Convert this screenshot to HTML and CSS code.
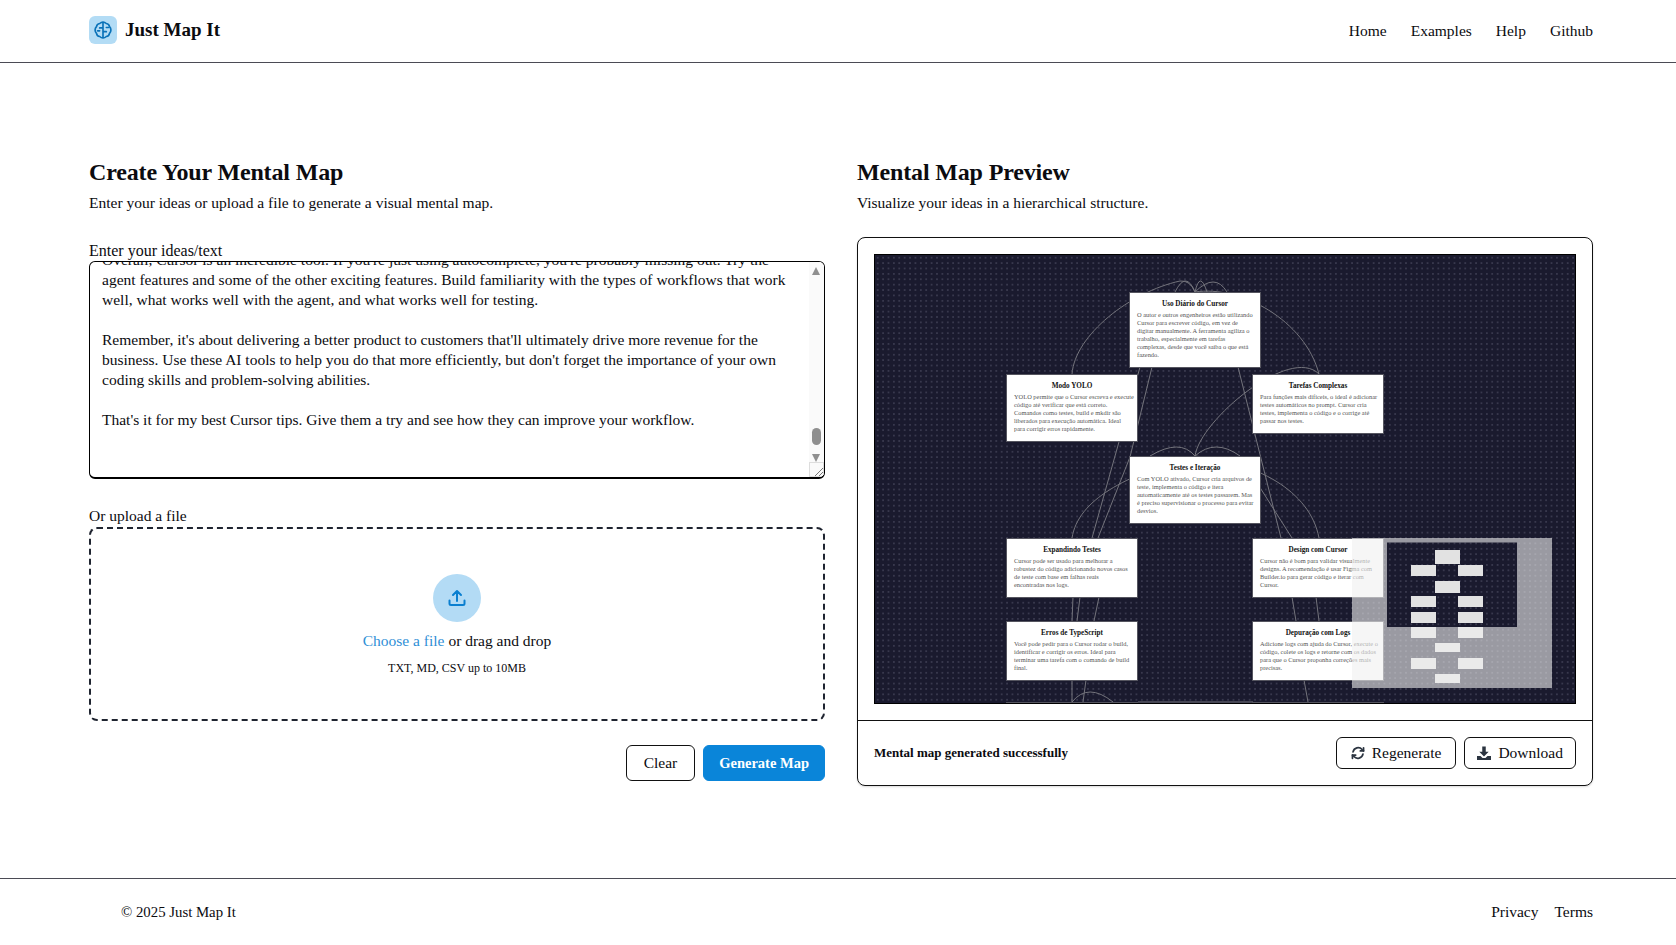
FILE: index.html
```html
<!DOCTYPE html>
<html lang="en">
<head>
    <meta charset="UTF-8">
    <meta name="viewport" content="width=device-width, initial-scale=1.0">
    <title>Just Map It</title>
    <link rel="stylesheet" href="styles.css">
</head>
<body>
    <header class="site-header">
        <a class="brand" href="#">
            <span class="brand-icon">
                <svg width="20" height="20" viewBox="0 0 24 24" fill="none" stroke="#0a72b8" stroke-width="2" stroke-linecap="round" stroke-linejoin="round">
                    <path d="M12 2.500c2 0 3 .8 4 1.700 2 .3 3.500 1.800 3.800 3.800 1 1 1.700 2.500 1.700 4s-.7 3-1.700 4c-.3 2-1.800 3.500-3.800 3.800-1 .9-2 1.700-4 1.700s-3-.8-4-1.700c-2-.3-3.500-1.800-3.800-3.800-1-1-1.700-2.500-1.700-4s.7-3 1.700-4c.3-2 1.800-3.500 3.800-3.800 1-.9 2-1.700 4-1.700z"/>
                    <path d="M12 3v18M8 9.500h4M12 14h4M5.500 13H8M16 9h2.500"/>
                </svg>
            </span>
            <span class="brand-name">Just Map It</span>
        </a>
        <nav class="site-nav">
            <a href="#">Home</a>
            <a href="#">Examples</a>
            <a href="#">Help</a>
            <a href="#">Github</a>
        </nav>
    </header>

    <main class="page-main">
        <section class="input-col">
            <h1>Create Your Mental Map</h1>
            <p class="lead">Enter your ideas or upload a file to generate a visual mental map.</p>

            <label class="field-label">Enter your ideas/text</label>
            <div class="text-box">
                <div class="text-content">
                    <p>Overall, Cursor is an incredible tool. If you're just using autocomplete, you're probably missing out. Try the<br>agent features and some of the other exciting features. Build familiarity with the types of workflows that work<br>well, what works well with the agent, and what works well for testing.</p>
                    <p>Remember, it's about delivering a better product to customers that'll ultimately drive more revenue for the<br>business. Use these AI tools to help you do that more efficiently, but don't forget the importance of your own<br>coding skills and problem-solving abilities.</p>
                    <p>That's it for my best Cursor tips. Give them a try and see how they can improve your workflow.</p>
                </div>
                <div class="scroll-bar">
                    <span class="arrow-up"></span>
                    <span class="thumb"></span>
                    <span class="arrow-down"></span>
                </div>
                <span class="resize-grip"></span>
            </div>

            <label class="field-label upload-label">Or upload a file</label>
            <div class="drop-zone">
                <span class="upload-circle">
                    <svg width="20" height="20" viewBox="0 0 20 20" fill="none" stroke="#0a7fd0" stroke-width="2" stroke-linecap="round" stroke-linejoin="round">
                        <path d="M2.500 12.500v3a1.500 1.500 0 0 0 1.500 1.500h12a1.500 1.500 0 0 0 1.500-1.500v-3"/>
                        <path d="M10 13V3M6 7l4-4 4 4"/>
                    </svg>
                </span>
                <p class="drop-text"><a href="#">Choose a file</a> or drag and drop</p>
                <p class="drop-hint">TXT, MD, CSV up to 10MB</p>
            </div>

            <div class="form-actions">
                <button class="btn btn-clear">Clear</button>
                <button class="btn btn-primary">Generate Map</button>
            </div>
        </section>

        <section class="preview-col">
            <h1>Mental Map Preview</h1>
            <p class="lead">Visualize your ideas in a hierarchical structure.</p>

            <div class="preview-card">
                <div class="map-area">
                    <svg class="edges" viewBox="875 255 700 448" fill="none" stroke="#74747c" stroke-width="1">
                        <path d="M1072 374C1075 335 1130 292 1180 281Q1190 280 1195 292"/>
                        <path d="M1175 292Q1186 270 1195 292Q1200 270 1207 292"/>
                        <path d="M1195 292Q1215 272 1227 292"/>
                        <path d="M1195 292C1240 285 1305 320 1319 374"/>
                        <path d="M1152 367L1130 457L1098 538"/>
                        <path d="M1140 367L1092 538"/>
                        <path d="M1238 367L1281 538"/>
                        <path d="M1195 456C1200 420 1290 345 1319 374"/>
                        <path d="M1150 456Q1180 438 1195 456Q1215 438 1240 456"/>
                        <path d="M1072 538C1078 500 1125 475 1195 456"/>
                        <path d="M1195 456C1255 462 1310 490 1319 538"/>
                        <path d="M1240 456L1292 538"/>
                        <path d="M1073 597L1072 621M1080 597L1077 621M1099 597L1094 621"/>
                        <path d="M1292 597L1296 621M1316 597L1319 621"/>
                        <path d="M1072 680L1072 702M1086 680L1083 702M1304 680L1308 702"/>
                        <path d="M1072 702Q1088 682 1113 702M1138 702H1253"/>
                    </svg>

                    <div class="map-node node-daily">
                        <h3>Uso Diário do Cursor</h3>
                        <p>O autor e outros engenheiros estão utilizando<br>Cursor para escrever código, em vez de<br>digitar manualmente. A ferramenta agiliza o<br>trabalho, especialmente em tarefas<br>complexas, desde que você saiba o que está<br>fazendo.</p>
                    </div>
                    <div class="map-node node-yolo">
                        <h3>Modo YOLO</h3>
                        <p>YOLO permite que o Cursor escreva e execute<br>código até verificar que está correto.<br>Comandos como testes, build e mkdir são<br>liberados para execução automática. Ideal<br>para corrigir erros rapidamente.</p>
                    </div>
                    <div class="map-node node-tasks">
                        <h3>Tarefas Complexas</h3>
                        <p>Para funções mais difíceis, o ideal é adicionar<br>testes automáticos no prompt. Cursor cria<br>testes, implementa o código e o corrige até<br>passar nos testes.</p>
                    </div>
                    <div class="map-node node-tests">
                        <h3>Testes e Iteração</h3>
                        <p>Com YOLO ativado, Cursor cria arquivos de<br>teste, implementa o código e itera<br>automaticamente até os testes passarem. Mas<br>é preciso supervisionar o processo para evitar<br>desvios.</p>
                    </div>
                    <div class="map-node node-expand">
                        <h3>Expandindo Testes</h3>
                        <p>Cursor pode ser usado para melhorar a<br>robustez do código adicionando novos casos<br>de teste com base em falhas reais<br>encontradas nos logs.</p>
                    </div>
                    <div class="map-node node-design">
                        <h3>Design com Cursor</h3>
                        <p>Cursor não é bom para validar visualmente<br>designs. A recomendação é usar Figma com<br>Builder.io para gerar código e iterar com<br>Cursor.</p>
                    </div>
                    <div class="map-node node-errors">
                        <h3>Erros de TypeScript</h3>
                        <p>Você pode pedir para o Cursor rodar o build,<br>identificar e corrigir os erros. Ideal para<br>terminar uma tarefa com o comando de build<br>final.</p>
                    </div>
                    <div class="map-node node-logs">
                        <h3>Depuração com Logs</h3>
                        <p>Adicione logs com ajuda do Cursor, execute o<br>código, colete os logs e retorne com os dados<br>para que o Cursor proponha correções mais<br>precisas.</p>
                    </div>
                    <div class="map-node node-cut-left"></div>
                    <div class="map-node node-cut-right"></div>

                    <svg class="mini-map" width="200" height="150" viewBox="1352 538 200 150">
                        <g fill="#e2e2e2">
                            <rect x="1435" y="550" width="25" height="14"/>
                            <rect x="1411" y="565" width="25" height="11"/>
                            <rect x="1458" y="565" width="25" height="11"/>
                            <rect x="1435" y="581" width="25" height="12"/>
                            <rect x="1411" y="596" width="25" height="11"/>
                            <rect x="1458" y="596" width="25" height="11"/>
                            <rect x="1411" y="612" width="25" height="11"/>
                            <rect x="1458" y="612" width="25" height="11"/>
                            <rect x="1411" y="627" width="25" height="11"/>
                            <rect x="1458" y="627" width="25" height="11"/>
                            <rect x="1435" y="643" width="25" height="9"/>
                            <rect x="1411" y="658" width="25" height="11"/>
                            <rect x="1458" y="658" width="25" height="11"/>
                            <rect x="1435" y="674" width="25" height="9"/>
                        </g>
                        <path fill="rgba(240,240,240,0.6)" fill-rule="evenodd" stroke="none" d="M1352 538h200v150h-200zM1387 542.500v84.500h130v-84.500z"/>
                    </svg>
                </div>
                <div class="preview-footer">
                    <span class="status">Mental map generated successfully</span>
                    <div class="preview-actions">
                        <button class="btn btn-small btn-regen">
                            <svg width="14" height="14" viewBox="0 0 24 24" fill="none" stroke="#2b3440" stroke-width="3" stroke-linecap="round" stroke-linejoin="round">
                                <path d="M3.500 10a9 9 0 0 1 15.500-4l2.500 2.500M20.500 14a9 9 0 0 1-15.500 4l-2.500-2.500"/>
                                <path d="M21.500 3v5.500h-5.500M2.500 21v-5.500h5.500"/>
                            </svg>
                            Regenerate
                        </button>
                        <button class="btn btn-small btn-download">
                            <svg width="14" height="14" viewBox="0 0 24 24" fill="#2b3440">
                                <path d="M9 1h6v9h5l-8 8-8-8h5z"/>
                                <path d="M0 17h6l3.500 3.500h5L18 17h6v7H0z"/>
                            </svg>
                            Download
                        </button>
                    </div>
                </div>
            </div>
        </section>
    </main>

    <footer class="site-footer">
        <span class="copyright">© 2025 Just Map It</span>
        <nav class="footer-nav">
            <a href="#">Privacy</a>
            <a href="#">Terms</a>
        </nav>
    </footer>
</body>
</html>
```

FILE: styles.css
```css
* {
    box-sizing: border-box;
}

body {
    margin: 0;
    height: 945px;
    display: flex;
    flex-direction: column;
    background-color: #fff;
    color: #0b0b0f;
    font-family: "Liberation Serif", serif;
    font-size: 15.500px;
    overflow: hidden;
}

a {
    color: inherit;
    text-decoration: none;
}

p {
    margin: 0;
}

.site-header {
    height: 63px;
    padding: 0 83px 0 89px;
    display: flex;
    align-items: center;
    justify-content: space-between;
    border-bottom: 1px solid #4b4b55;
}

.brand {
    display: flex;
    align-items: center;
    gap: 8px;
    margin-top: -3px;
}

.brand-icon {
    width: 28px;
    height: 28px;
    display: flex;
    align-items: center;
    justify-content: center;
    border-radius: 6px;
    background-color: #b3dcf5;
}

.brand-name {
    font-size: 19px;
    font-weight: bold;
}

.site-nav {
    display: flex;
    gap: 24px;
}

.page-main {
    flex: 1;
    padding: 93px 82px 0 89px;
    display: grid;
    grid-template-columns: 736px 737px;
    column-gap: 32px;
    align-items: start;
}

h1 {
    margin: 0;
    font-size: 24px;
    line-height: 32px;
    font-weight: bold;
    letter-spacing: -0.150px;
}

.lead {
    margin-top: 3px;
    line-height: 24px;
}

.field-label {
    display: block;
    margin-top: 26px;
    font-size: 16px;
    line-height: 20px;
}

.text-box {
    position: relative;
    height: 218px;
    overflow: hidden;
    border: 1px solid #000;
    border-bottom-width: 2px;
    border-radius: 6px;
}

.text-content {
    margin-top: -12px;
    padding-left: 12px;
    line-height: 20px;
    white-space: nowrap;
}

.text-content p {
    margin-bottom: 20px;
}

.scroll-bar {
    position: absolute;
    top: 0;
    right: 0;
    bottom: 0;
    width: 15px;
    background-color: #fafafa;
}

.arrow-up,
.arrow-down,
.thumb {
    position: absolute;
    left: 3px;
}

.arrow-up {
    top: 5px;
    border-left: 4.500px solid transparent;
    border-right: 4.500px solid transparent;
    border-bottom: 8px solid #8f8f8f;
}

.thumb {
    top: 166px;
    width: 9px;
    height: 17px;
    border-radius: 5px;
    background-color: #8f8f8f;
}

.arrow-down {
    top: 192px;
    border-left: 4.500px solid transparent;
    border-right: 4.500px solid transparent;
    border-top: 8px solid #8f8f8f;
}

.resize-grip {
    position: absolute;
    right: 0;
    bottom: 0;
    width: 15px;
    height: 15px;
    background: linear-gradient(135deg, #fafafa 66%, #777 66%, #777 70%, #fafafa 70%, #fafafa 84%, #777 84%, #777 88%, #fafafa 88%);
    border: 1px solid #ddd;
}

.upload-label {
    margin-top: 27px;
    font-size: 15.500px;
}

.drop-zone {
    height: 194px;
    margin-top: 1px;
    padding-top: 45px;
    display: flex;
    flex-direction: column;
    align-items: center;
    border: 2px dashed #1f2430;
    border-radius: 8px;
}

.upload-circle {
    width: 48px;
    height: 48px;
    display: flex;
    align-items: center;
    justify-content: center;
    border-radius: 50%;
    background-color: #b3dbf5;
}

.drop-text {
    margin-top: 7px;
    line-height: 24px;
}

.drop-text a {
    color: #2f8fd6;
}

.drop-hint {
    margin-top: 5px;
    font-size: 12px;
    line-height: 20px;
}

.form-actions {
    margin-top: 24px;
    display: flex;
    justify-content: flex-end;
    gap: 8px;
}

.btn {
    height: 36px;
    padding: 0 16px;
    display: inline-flex;
    align-items: center;
    gap: 7px;
    background-color: #fff;
    color: #0b0b0f;
    border: 1px solid #111;
    border-radius: 6px;
    font-family: inherit;
    font-size: 15.500px;
    cursor: pointer;
}

.btn-clear {
    padding: 0 17px;
}

.btn-primary {
    padding: 0 15px;
    background-color: #0a85d9;
    border-color: #0a85d9;
    color: #fff;
    font-size: 14.500px;
    font-weight: bold;
}

.btn-small {
    height: 32px;
    justify-content: center;
}

.btn-regen {
    padding: 0 14px;
}

.btn-download {
    padding: 0 12px;
}

.preview-card {
    width: 736px;
    height: 549px;
    margin-top: 22px;
    border: 1px solid #111;
    border-radius: 8px;
    box-shadow: 0 1px 2px rgba(0, 0, 0, 0.15);
    display: flex;
    flex-direction: column;
}

.map-area {
    position: relative;
    height: 450px;
    margin: 16px 16px 0;
    overflow: hidden;
    border: 1px solid #000;
    background-color: #1a1a2e;
    background-image: radial-gradient(circle, #38384d 0.7px, transparent 0.9px);
    background-size: 5.400px 5.400px;
}

.edges {
    position: absolute;
    top: 0;
    left: 0;
    width: 700px;
    height: 448px;
}

.map-node {
    position: absolute;
    width: 132px;
    padding: 7px 7px 6px;
    background-color: #fff;
    border: 1px solid #55555f;
    color: #555;
    font-size: 6.400px;
    line-height: 8.100px;
    white-space: nowrap;
}

.map-node h3 {
    margin: 0 0 2px;
    color: #111;
    font-size: 7.200px;
    line-height: 9px;
    font-weight: bold;
    text-align: center;
}

.node-daily {
    left: 254px;
    top: 37px;
    height: 76px;
}

.node-yolo {
    left: 131px;
    top: 119px;
    height: 68px;
}

.node-tasks {
    left: 377px;
    top: 119px;
    height: 60px;
}

.node-tests {
    left: 254px;
    top: 201px;
    height: 68px;
}

.node-expand {
    left: 131px;
    top: 283px;
    height: 60px;
}

.node-design {
    left: 377px;
    top: 283px;
    height: 60px;
}

.node-errors {
    left: 131px;
    top: 366px;
    height: 60px;
}

.node-logs {
    left: 377px;
    top: 366px;
    height: 60px;
}

.node-cut-left {
    left: 131px;
    top: 447px;
    height: 20px;
}

.node-cut-right {
    left: 377px;
    top: 447px;
    height: 20px;
}

.mini-map {
    position: absolute;
    right: 23px;
    bottom: 15px;
}

.preview-footer {
    flex: 1;
    margin-top: 16px;
    padding: 0 16px;
    display: flex;
    align-items: center;
    justify-content: space-between;
    border-top: 1px solid #111;
}

.status {
    font-size: 13px;
    font-weight: bold;
}

.preview-actions {
    display: flex;
    gap: 8px;
}

.site-footer {
    height: 67px;
    padding: 0 83px 0 121px;
    display: flex;
    align-items: center;
    justify-content: space-between;
    border-top: 1px solid #4b4b55;
}

.copyright {
    font-size: 14.800px;
}

.footer-nav {
    display: flex;
    gap: 16px;
}
```
